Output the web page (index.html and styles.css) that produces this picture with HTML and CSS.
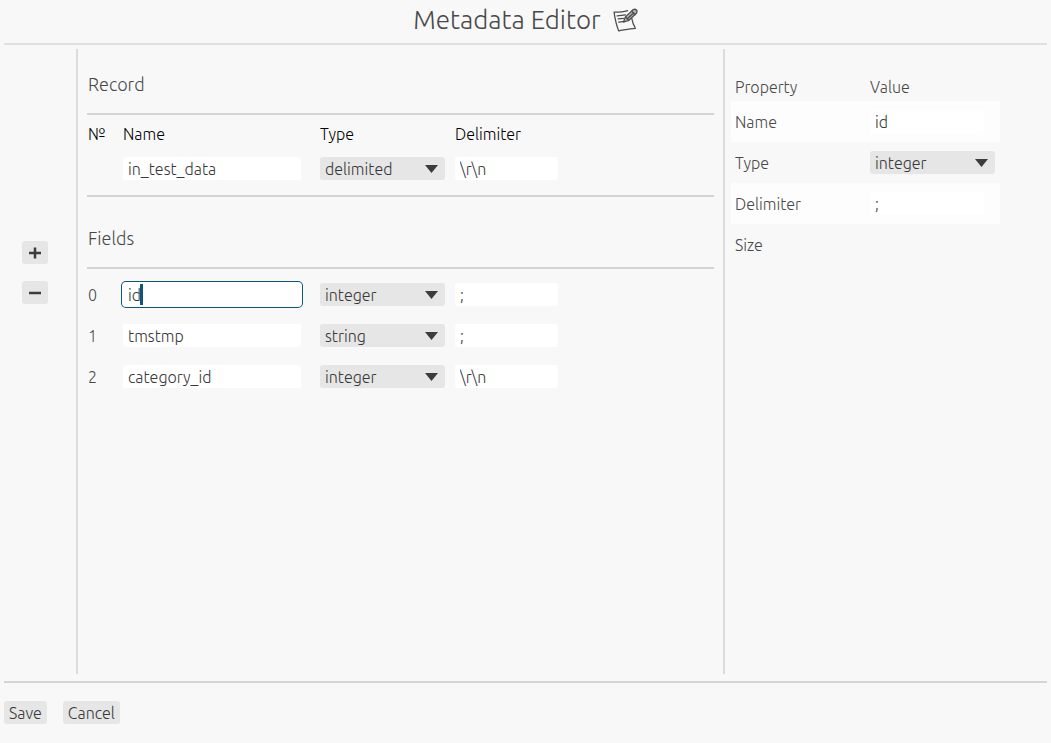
FILE: index.html
```html
<!DOCTYPE html>
<html lang="en">
<head>
<meta charset="utf-8">
<title>Metadata Editor</title>
<link rel="stylesheet" href="styles.css">
</head>
<body>
<div class="app">
  <header class="header">
    <h1 class="title">Metadata Editor</h1>
    <svg class="title-icon" viewBox="0 0 24 24" aria-hidden="true">
      <path d="M14 2.500 C9 4 5 4 1 4 C2 11 3 16 5.500 22 C11 20.500 16 20 21.500 19.500 C19.500 16 18.500 13 18 10" />
      <path d="M4 7.500 L12 6.500 M5 10.500 L10 10 M5.500 13.500 L9.500 13" />
      <path class="pencil" d="M10 13.500 L12 8.500 L19.500 1.500 C22 .5 24 2.500 22.500 5 L15 12 Z" />
      <path d="M12 8.500 L15 12 M18 3 L21 6.500 M14 10 L20 4.500" />
    </svg>
  </header>

  <main class="main">
    <nav class="tools" aria-label="Field actions">
      <button class="btn btn-tool" type="button" aria-label="Add field">
        <svg class="tool-icon" viewBox="0 0 12 12" aria-hidden="true"><path d="M0 6H12M6 0.500V11.500"/></svg>
      </button>
      <button class="btn btn-tool" type="button" aria-label="Remove field">
        <svg class="tool-icon" viewBox="0 0 12 12" aria-hidden="true"><path d="M0 6H12"/></svg>
      </button>
    </nav>

    <div class="editor">
      <h2 class="section-title">Record</h2>
      <table class="grid grid-record">
        <thead>
          <tr><th class="col-no">№</th><th class="col-name">Name</th><th class="col-type">Type</th><th class="col-delim">Delimiter</th></tr>
        </thead>
        <tbody>
          <tr>
            <td></td>
            <td><input class="field field-name" type="text" aria-label="Record name" value="in_test_data"></td>
            <td><span class="select"><select aria-label="Record type"><option>delimited</option><option>fixed</option></select></span></td>
            <td><input class="field field-delim" type="text" aria-label="Record delimiter" value="\r\n"></td>
          </tr>
        </tbody>
      </table>

      <h2 class="section-title section-title-fields">Fields</h2>
      <table class="grid grid-fields">
        <tbody>
          <tr>
            <td class="col-no">0</td>
            <td class="col-name"><span class="focus-wrap"><input class="field field-name is-focused" type="text" aria-label="Field 0 name" value="id"><span class="caret"></span></span></td>
            <td class="col-type"><span class="select"><select aria-label="Field 0 type"><option>integer</option><option>string</option></select></span></td>
            <td class="col-delim"><input class="field field-delim" type="text" aria-label="Field 0 delimiter" value=";"></td>
          </tr>
          <tr>
            <td>1</td>
            <td><input class="field field-name" type="text" aria-label="Field 1 name" value="tmstmp"></td>
            <td><span class="select"><select aria-label="Field 1 type"><option>string</option><option>integer</option></select></span></td>
            <td><input class="field field-delim" type="text" aria-label="Field 1 delimiter" value=";"></td>
          </tr>
          <tr>
            <td>2</td>
            <td><input class="field field-name" type="text" aria-label="Field 2 name" value="category_id"></td>
            <td><span class="select"><select aria-label="Field 2 type"><option>integer</option><option>string</option></select></span></td>
            <td><input class="field field-delim" type="text" aria-label="Field 2 delimiter" value="\r\n"></td>
          </tr>
        </tbody>
      </table>
    </div>

    <aside class="properties">
      <table class="props">
        <thead>
          <tr><th class="prop-key">Property</th><th class="prop-value">Value</th></tr>
        </thead>
        <tbody>
          <tr><td><label for="prop-name">Name</label></td><td><input id="prop-name" class="field field-prop" type="text" value="id"></td></tr>
          <tr><td><label for="prop-type">Type</label></td><td><span class="select"><select id="prop-type"><option>integer</option><option>string</option></select></span></td></tr>
          <tr><td><label for="prop-delim">Delimiter</label></td><td><input id="prop-delim" class="field field-prop" type="text" value=";"></td></tr>
          <tr><td>Size</td><td></td></tr>
        </tbody>
      </table>
    </aside>
  </main>

  <footer class="footer">
    <button class="btn" type="button">Save</button>
    <button class="btn" type="button">Cancel</button>
  </footer>
</div>
</body>
</html>
```
FILE: styles.css
```css
* {
  box-sizing: border-box;
}

body {
  margin: 0;
  background: #f8f8f8;
  color: #484848;
  font: 300 16px/20px Ubuntu, "Noto Sans", sans-serif;
}

.app {
  display: flex;
  flex-direction: column;
  min-height: 100vh;
  padding: 0 4px;
}

.header {
  display: flex;
  justify-content: center;
  align-items: center;
  gap: 12px;
  height: 45px;
  padding-bottom: 3px;
  border-bottom: 2px solid #e0e0e0;
}

.title {
  margin: 0;
  font-size: 26px;
  line-height: 32px;
  font-weight: 300;
}

.title-icon {
  width: 25px;
  height: 25px;
  fill: none;
  stroke: #4c4c4c;
  stroke-width: 1.2;
  stroke-linecap: round;
  stroke-linejoin: round;
}

.pencil {
  fill: #b4b4b4;
}

.main {
  flex: 1;
  display: grid;
  grid-template-columns: 72px 1fr 324px;
  margin: 4px 0 7px;
}

.tools {
  display: flex;
  flex-direction: column;
  gap: 17px;
  padding: 192px 0 0 18px;
}

.btn {
  height: 23px;
  padding: 0 5px;
  border: 0;
  border-radius: 3px;
  background: #e6e6e6;
  color: #383838;
  font: inherit;
}

.btn-tool {
  display: flex;
  align-items: center;
  justify-content: center;
  width: 26px;
}

.tool-icon {
  width: 12px;
  height: 12px;
  flex: none;
  stroke: #3c3c3c;
  stroke-width: 2.5;
}

.editor {
  padding: 0 9px;
  border-left: 2px solid #dcdcdc;
}

.section-title {
  margin: 0;
  padding: 23px 0 17px 1px;
  border-bottom: 2px solid #d4d4d4;
  font-size: 18px;
  line-height: 24px;
  font-weight: 300;
}

.section-title-fields {
  padding: 29px 0 17px 1px;
  border-top: 2px solid #d4d4d4;
}

.grid,
.props {
  border-collapse: collapse;
  table-layout: fixed;
}

.grid {
  width: 471px;
  margin-left: 1px;
}

.grid th,
.grid td,
.props th,
.props td {
  padding: 0;
  text-align: left;
  font-weight: 300;
}

.grid th {
  height: 33px;
  padding-top: 4px;
  color: #000;
}

.grid td {
  height: 41px;
}

.grid-record {
  margin-bottom: 6px;
}

.grid-fields {
  margin-top: 5px;
}

.col-no {
  width: 35px;
}

.col-name {
  width: 197px;
}

.col-type {
  width: 135px;
}

.field {
  display: block;
  height: 23px;
  padding: 0 5px;
  border: 0;
  border-radius: 3px;
  background: #fff;
  color: #383838;
  font: inherit;
}

.field-name {
  width: 178px;
}

.field-delim {
  width: 103px;
}

.field-prop {
  width: 114px;
}

.is-focused {
  box-shadow: 0 0 0 1px #fff, 0 0 0 2px #0b5580;
}

.focus-wrap {
  display: block;
  position: relative;
}

.caret {
  position: absolute;
  top: 1px;
  left: 17px;
  width: 3px;
  height: 21px;
  background: #0b5580;
}

.select {
  display: block;
  position: relative;
  width: 125px;
}

.select select {
  display: block;
  appearance: none;
  width: 100%;
  height: 23px;
  padding: 0 24px 0 5px;
  border: 0;
  border-radius: 3px;
  background: #e6e6e6;
  color: #383838;
  font: inherit;
}

.select::after {
  content: "";
  position: absolute;
  top: 8px;
  right: 7px;
  width: 13px;
  height: 8px;
  background: #3c3c3c;
  clip-path: polygon(0 0, 100% 0, 50% 100%);
  pointer-events: none;
}

.properties {
  padding: 23px 0 0 6px;
  border-left: 2px solid #dcdcdc;
}

.props {
  width: 269px;
}

.props .prop-key {
  width: 139px;
}

.props th,
.props td {
  height: 41px;
}

.props th {
  height: 29px;
}

.props th:first-child,
.props td:first-child {
  padding-left: 4px;
}

.props tbody tr:nth-child(odd) {
  background: #fdfdfd;
}

.footer {
  display: flex;
  gap: 16px;
  padding: 18px 0 19px;
  border-top: 2px solid #d4d4d4;
}
```
